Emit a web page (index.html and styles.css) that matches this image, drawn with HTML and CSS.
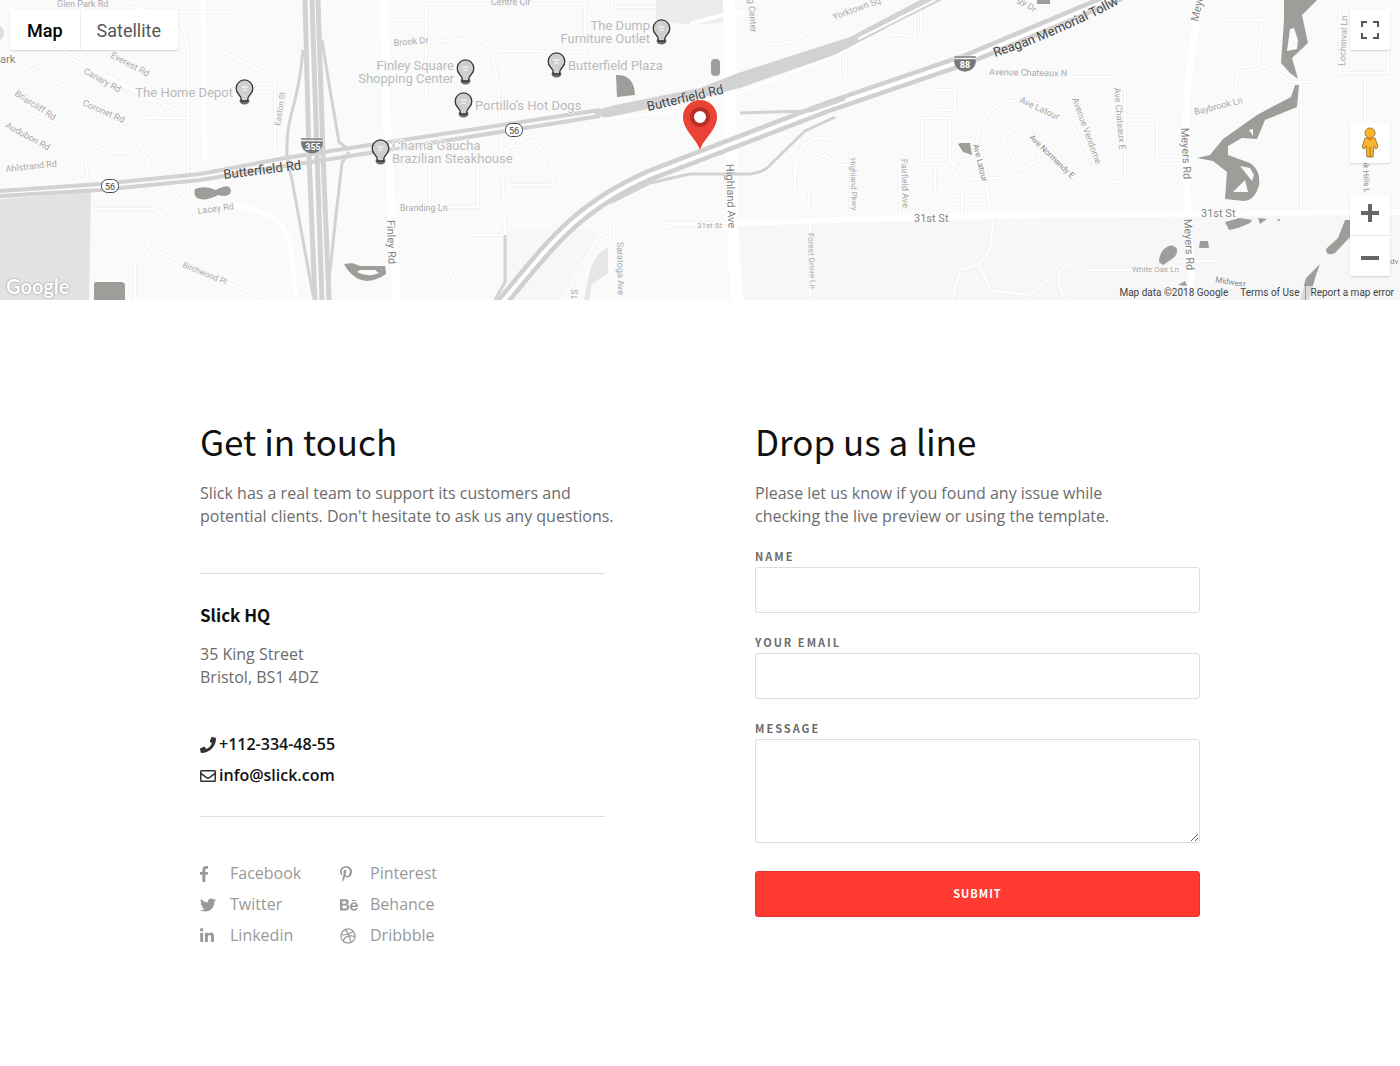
FILE: index.html
```html
<!DOCTYPE html>
<html lang="en">
<head>
<meta charset="utf-8">
<title>Slick – Contact</title>
<meta name="viewport" content="width=device-width, initial-scale=1">
<link rel="stylesheet" href="styles.css">
</head>
<body>
<section class="map" aria-label="Map">
<svg class="map-canvas" viewBox="0 0 1400 300" preserveAspectRatio="xMidYMid slice">
  <defs>
    <g id="poi">
      <ellipse cx="0" cy="9" rx="5" ry="3.500" fill="#6b6b6b"/>
      <path d="M-3 9C-3 6-4 4-6 2A8.300 8.300 0 1 1 6 2C4 4 3 6 3 9Z" fill="#cfcfcf" stroke="#333" stroke-width="1.300"/>
      <path d="M-3-5h6M-2-2h4" stroke="#f4f4f4" stroke-width="1.300"/>
    </g>
    <g id="route">
      <rect x="-8.500" y="-6.500" width="17" height="13" rx="6" fill="#fff" stroke="#444"/>
      <text class="shield-text" y="3.500">56</text>
    </g>
    <path id="shield" d="M-11-4H11C12 1 9 8 0 9C-9 8-12 1-11-4ZM-11-7H11V-5H-11Z" fill="#777" stroke="#fff" stroke-width=".5"/>
    <path id="tollway" d="M995 57Q1060 36 1130-2"/>
  </defs>
  <rect width="1400" height="300" fill="#fafafa"/>
  <path fill="#f7f7f7" d="M735 224L1400 212V300H740ZM505 230H600L560 300H500Z"/>
  <path fill="#e2e2e2" d="M0 199L91 192L89 300H0Z"/>
  <path fill="#ececec" d="M656 0H725V22L690 25L656 20Z"/>
  <path fill="#e6e6e6" d="M608 247V273L592 284L589 300H584L588 280Q592 255 608 247Z"/>
  <circle cx="-4" cy="33" r="8" fill="#ddd"/>

  <g class="minor-edge">
    <path id="lanes" d="M60 48L120 82L185 115M60 48L0 84M32 68L110 112L142 148L150 170M0 102L60 125L85 155L88 180M55 50L150 100Q175 115 145 118H190M110 0Q120 10 185 12H230M165 0Q190 30 188 60V190L180 200Q155 210 148 245L135 265V300M95 209H155L163 216M148 247L260 297M220 50L275 78V150M275 88H240M85 140L110 153Q150 150 155 170M426 100V4H585V52L500 51L475 38L430 42M492 51L499 90L505 235M473 235H505M378 20H426M430 160V207H478V160M505 150L525 130L550 160L554 185H510M500 150L540 140M612 0V7H656M620 50L625 75M760 0V25L770 45L790 42L850 12L875 0M840 52V80M846 52V75M870 40Q890 30 915 38V5M921 0V35M795 190V165Q800 140 820 138Q845 140 851 155V215M808 220L809 190L795 165M810 225V300M800 165L825 155L838 165H850M900 160V215M920 160H950L962 190V215M922 118H950V160H922ZM935 90H955V110H940ZM950 160L970 180L985 178L993 225L990 250L979 264L960 270L952 300M979 264L990 290L1030 295L1050 278M977 140Q980 110 1010 101Q1060 100 1075 130L1095 165M977 140L988 178H1000V210M1003 140Q1010 125 1030 128L1040 160L1020 170ZM987 80L995 107M1072 77H1110L1125 90V180L1090 186L1060 170M1125 120H1157V160H1185M1072 77V95L1095 150M1225 20H1264V0M1262 20L1258 65L1238 68L1235 95M1258 65L1275 70L1290 82H1310L1340 73H1388V45M1340 73V10M1365 80V212M1085 270H1180M1180 261H1215M665 223H730M610 225V238L600 235L575 275L565 300M652 245Q655 225 680 225H700M461 250L450 275L440 300M950 200H990M920 175V210M935 170V190M1070 265Q1050 270 1065 300M1301 85V210"/>
  </g>
  <g class="minor">
    <use href="#lanes"/>
  </g>
  <g fill="none" stroke="#fff" stroke-linejoin="round">
    <path stroke-width="8" d="M384 0L387 130L397 300"/>
    <path stroke-width="12" d="M729 0L732 220L737 300"/>
    <path stroke-width="7" d="M1201 0C1188 60 1184 100 1187 190L1192 300"/>
    <path stroke-width="6" d="M738 223L1000 215L1400 212"/>
    <path stroke-width="4" d="M203 0L205 160M218 205C270 205 288 225 291 250L296 300M690 24L730 13H745"/>
  </g>

  <g fill="none" stroke="#d2d2d2" stroke-linejoin="round">
    <path stroke-width="5" d="M305 0L309 155L315 300"/>
    <path stroke-width="5" d="M312 0L317 155L322 300M318 0L323 155L329 300"/>
    <path stroke-width="3" d="M303 50Q300 85 291 115Q286 135 287 158L292 180L313 295M322 40L330 90L339 142L349 150M349 152L342 163L336 215L328 290"/>
    <path stroke-width="4" d="M0 191L100 184L200 174L285 158L350 148L600 110"/>
    <path stroke-width="4" d="M0 196L100 190L200 180L285 166L350 156L600 116"/>
    <path stroke-width="3" d="M505 235V282L495 300"/>
  </g>
  <path fill="#d2d2d2" d="M590 112L615 105L700 88L738 73L850 37L920 0H942L890 26L840 53L740 88L700 98L605 118Z"/>
  <path fill="none" stroke="#fff" stroke-width="2" d="M600 119L690 110L740 93L835 56L870 38M858 39L935 0"/>
  <path fill="none" stroke="#d0d0d0" stroke-width="13" d="M500 305C550 245 575 208 650 175L830 106L965 60L1120-5"/>
  <path fill="none" stroke="#fff" stroke-width="4" d="M500 305C550 245 575 208 650 175L830 106L965 60L1120-5"/>
  <path fill="none" stroke="#d2d2d2" stroke-width="3" d="M740 113L810 111L845 99M610 203L650 183L690 174H750Q765 172 770 165L805 131L835 117"/>

  <g fill="#9d9e99">
    <path d="M94 284Q94 282 96 282H122L125 284V300H94Z"/>
    <path d="M195 189Q205 185 216 190Q230 182 231 191Q230 198 218 195Q205 202 197 198Q193 194 195 189Z"/>
    <path fill-rule="evenodd" d="M344 264L352 263L360 266L385 266L386 274Q376 281 366 281Q352 279 344 264ZM357 272Q368 278 379 273L375 270H360Z"/>
    <path d="M616 75Q634 74 635 95L617 97Z"/>
    <rect x="711" y="59" width="9" height="17" rx="4"/>
    <path d="M958 144L961 143H970L972 155L963 152ZM1037 0H1050V4H1037Z"/>
    <path fill-rule="evenodd" d="M1284 0H1317L1302 15L1308 43L1292 58L1298 79L1290 73L1281 63L1284 20ZM1290 29L1287 51L1297 49L1298 40L1294 28Z"/>
    <path fill-rule="evenodd" d="M1295 85H1299L1297 107L1265 120L1257 139L1242 138L1228 146L1228 155L1250 163Q1261 170 1259 185Q1255 200 1244 201L1225 199L1227 172L1213 161L1197 158L1210 155L1223 139L1257 115L1291 97ZM1249 130L1253 136L1253 129ZM1240 166L1252 181L1254 175L1250 168ZM1233 192L1248 192L1245 180Z"/>
    <path d="M1225 222L1240 218L1252 220L1250 223L1238 228L1229 230ZM1258 218L1267 219L1260 224ZM1276 220L1280 219V221ZM1200 241H1208L1209 248H1199ZM1159 262Q1159 254 1164 249Q1172 242 1177 249Q1178 255 1172 259L1163 265ZM1178 285L1185 281L1187 286ZM1345 220H1352V235L1335 253Q1326 257 1326 249L1338 238ZM1320 264L1316 275L1309 300H1300L1306 278Z"/>
  </g>

  <use href="#route" x="110" y="186"/><use href="#route" x="514" y="130"/>
  <use href="#shield" x="312" y="145"/><use href="#shield" x="965" y="63"/>
  <text class="shield-num" x="313" y="150">355</text>
  <text class="shield-num" x="965" y="68">88</text>

  <g class="street">
    <text x="57" y="7">Glen Park Rd</text>
    <text transform="translate(110 57) rotate(28)">Everest Rd</text>
    <text transform="translate(83 73) rotate(29)">Canary Rd</text>
    <text transform="translate(82 105) rotate(24)">Coronet Rd</text>
    <text transform="translate(14 95) rotate(33)">Briarcliff Rd</text>
    <text transform="translate(5 127) rotate(29)">Audubon Rd</text>
    <text transform="translate(6 172) rotate(-6)">Ahlstrand Rd</text>
    <text transform="translate(198 214) rotate(-8)">Lacey Rd</text>
    <text transform="translate(182 267) rotate(22)" class="tiny">Birchwood Pl</text>
    <text transform="translate(280 126) rotate(-81)" class="tiny">Easton St</text>
    <text x="491" y="5">Centre Cir</text>
    <text transform="translate(394 46) rotate(-5)">Brook Dr</text>
    <text x="400" y="211">Branding Ln</text>
    <text transform="translate(617 242) rotate(89)">Saratoga Ave</text>
    <text x="697" y="228" class="tiny">31st St</text>
    <text transform="translate(577 300) rotate(-85)">1S</text>
    <text transform="translate(748 -6) rotate(86)">ng Center</text>
    <text transform="translate(834 20) rotate(-20)">Yorktown Sq</text>
    <text transform="translate(1017 1) rotate(35)">gy Dr</text>
    <text transform="translate(850 158) rotate(88)" class="tiny">Highland Pkwy</text>
    <text transform="translate(901 159) rotate(88)">Fairfield Ave</text>
    <text transform="translate(808 233) rotate(88)" class="tiny">Forest Grove Ln</text>
    <text transform="translate(989 75) rotate(1)">Avenue Chateaux N</text>
    <text transform="translate(1019 102) rotate(25)">Ave Latour</text>
    <text transform="translate(973 145) rotate(76)" class="tiny dark">Ave Latour</text>
    <text transform="translate(1029 138) rotate(44)" class="tiny dark">Ave Normandy E</text>
    <text transform="translate(1072 99) rotate(70)">Avenue Vendome</text>
    <text transform="translate(1114 88) rotate(85)">Ave Chateaux E</text>
    <text transform="translate(1195 115) rotate(-14)">Baybrook Ln</text>
    <text transform="translate(1345 66) rotate(-87)">Lochinval Ln</text>
    <text transform="translate(1363 160) rotate(88)" class="tiny dark">ok Hills L</text>
    <text x="1132" y="272" class="tiny">White Oak Ln</text>
    <text transform="translate(1215 282) rotate(10)" class="tiny dark">Midwest</text>
    <text x="1388" y="264" class="tiny dark">idv</text>
  </g>
  <g class="road">
    <text x="0" y="63">ark</text>
    <text transform="translate(387 220) rotate(88)">Finley Rd</text>
    <text transform="translate(726 164) rotate(88)">Highland Ave</text>
    <text transform="translate(1181 128) rotate(87)">Meyers Rd</text>
    <text transform="translate(1184 219) rotate(87)">Meyers Rd</text>
    <text transform="translate(1198 22) rotate(-77)">Meyers</text>
    <text x="914" y="222">31st St</text><text x="1201" y="217">31st St</text>
  </g>
  <g class="highway">
    <text transform="translate(224 179) rotate(-7)">Butterfield Rd</text>
    <text transform="translate(648 111) rotate(-13)">Butterfield Rd</text>
    <text><textPath href="#tollway">Reagan Memorial Tollw</textPath></text>
  </g>
  <g class="place">
    <text x="233" y="97" text-anchor="end">The Home Depot</text>
    <text x="454" y="70" text-anchor="end">Finley Square</text>
    <text x="454" y="83" text-anchor="end">Shopping Center</text>
    <text x="475" y="110">Portillo's Hot Dogs</text>
    <text x="568" y="70">Butterfield Plaza</text>
    <text x="650" y="30" text-anchor="end">The Dump</text>
    <text x="650" y="43" text-anchor="end">Furniture Outlet</text>
    <text x="392" y="150">Chama Gaucha</text>
    <text x="392" y="163">Brazilian Steakhouse</text>
  </g>
  <use href="#poi" x="244.500" y="92"/><use href="#poi" x="465.500" y="72"/><use href="#poi" x="463.500" y="105"/>
  <use href="#poi" x="556.500" y="65"/><use href="#poi" x="661.500" y="32"/><use href="#poi" x="380.500" y="152"/>
  <path fill="#ea4335" d="M700 150C696 138 683 130 683 117A17 17 0 0 1 717 117C717 130 704 138 700 150Z"/>
  <circle cx="700" cy="117" r="8" fill="#fff" stroke="#b92f25" stroke-width="4"/>
</svg>
  <div class="map-types">
    <button type="button" class="active">Map</button>
    <button type="button">Satellite</button>
  </div>
  <div class="map-tools">
    <button type="button" class="tool" aria-label="Fullscreen"><svg width="18" height="18" viewBox="0 0 18 18" fill="none" stroke="#555" stroke-width="2"><path d="M1 6V1h5M12 1h5v5M17 12v5h-5M6 17H1v-5"/></svg></button>
    <button type="button" class="tool pegman" aria-label="Street View"><svg width="18" height="32" viewBox="0 0 18 32" fill="#fbb52c" stroke="#8a6a25" stroke-width=".8"><path d="M4 11h10l3 9-2 2-2-3-1 11H6L5 19l-2 3-2-2z"/><path d="M9 20v10"/><circle cx="9" cy="6" r="5"/><path d="M6 11l3 3 3-3z" fill="#e58025" stroke="none"/></svg></button>
    <div class="zoom">
      <button type="button" class="tool" aria-label="Zoom in"><svg width="18" height="18" viewBox="0 0 18 18" stroke="#666" stroke-width="4"><path d="M0 9h18M9 0v18"/></svg></button>
      <button type="button" class="tool" aria-label="Zoom out"><svg width="18" height="18" viewBox="0 0 18 18" stroke="#666" stroke-width="4"><path d="M0 9h18"/></svg></button>
    </div>
  </div>
  <a class="map-logo" href="#">Google</a>
  <div class="map-legal"><span>Map data ©2018 Google</span><a href="#">Terms of Use</a><a href="#">Report a map error</a></div>
</section>

<main class="contact">
  <section class="info">
    <h1>Get in touch</h1>
    <p class="lead">Slick has a real team to support its customers and<br>potential clients. Don't hesitate to ask us any questions.</p>
    <address class="office">
      <h2>Slick HQ</h2>
      <p>35 King Street<br>Bristol, BS1 4DZ</p>
      <ul class="direct">
        <li><a href="tel:+1123344855"><svg class="icon" viewBox="0 0 512 512"><path d="M493.400 24.600l-104-24c-11.300-2.600-22.900 3.300-27.500 13.900l-48 112c-4.200 9.800-1.400 21.300 6.900 28l60.600 49.600c-36 76.700-98.900 140.500-177.200 177.200l-49.600-60.600c-6.800-8.300-18.200-11.100-28-6.900l-112 48C3.900 366.500-2 378.100.6 389.400l24 104C27.100 504.200 36.700 512 48 512c256.100 0 464-207.500 464-464 0-11.200-7.700-20.900-18.600-23.400z"/></svg>+112-334-48-55</a></li>
        <li><a href="mailto:info@slick.com"><svg class="icon" viewBox="0 0 512 512"><path d="M464 64H48C21.490 64 0 85.490 0 112v288c0 26.510 21.490 48 48 48h416c26.510 0 48-21.490 48-48V112c0-26.510-21.490-48-48-48zm0 48v40.805c-22.422 18.259-58.168 46.651-134.587 106.490-16.841 13.247-50.201 45.072-73.413 44.701-23.208.375-56.579-31.459-73.413-44.701C106.180 199.465 70.425 171.067 48 152.805V112h416zM48 400V214.398c22.914 18.251 55.409 43.862 104.938 82.646 21.857 17.205 60.134 55.186 103.062 54.955 42.717.231 80.509-37.199 103.053-54.947 49.528-38.783 82.032-64.401 104.947-82.653V400H48z"/></svg>info@slick.com</a></li>
      </ul>
    </address>
    <ul class="social">
      <li><a href="#"><svg class="icon" viewBox="0 0 264 512"><path d="M215.800 85H264V3.600C255.700 2.500 227.100 0 193.800 0 124.300 0 76.700 42.400 76.700 120.300V192H0v91h76.700v229h94V283h73.600l11.700-91h-85.300v-62.700c0-26.300 7.300-44.300 45.100-44.300z"/></svg><span>Facebook</span></a></li>
      <li><a href="#"><svg class="icon" viewBox="0 0 384 512"><path d="M204 6.500C101.400 6.500 0 74.900 0 185.600 0 256 39.600 296 63.600 296c9.900 0 15.600-27.600 15.600-35.400 0-9.300-23.700-29.100-23.700-67.800 0-80.400 61.200-137.400 140.400-137.400 68.100 0 118.500 38.700 118.500 109.800 0 53.100-21.300 152.700-90.300 152.700-24.900 0-46.200-18-46.200-43.800 0-37.800 26.400-74.400 26.400-113.400 0-66.200-93.900-54.200-93.900 25.800 0 16.800 2.100 35.400 9.600 50.700-13.800 59.400-42 147.900-42 209.100 0 18.900 2.700 37.500 4.500 56.400 3.400 3.800 1.700 3.400 6.900 1.500 50.400-69 48.600-82.500 71.400-172.800 12.300 23.400 44.100 36 69.300 36 106.200 0 153.900-103.500 153.900-196.800C384 71.300 298.200 6.500 204 6.500z"/></svg><span>Pinterest</span></a></li>
      <li><a href="#"><svg class="icon" viewBox="0 0 512 512"><path d="M459.370 151.716c.325 4.548.325 9.097.325 13.645 0 138.720-105.583 298.558-298.558 298.558-59.452 0-114.680-17.219-161.137-47.106 8.447.974 16.568 1.299 25.340 1.299 49.055 0 94.213-16.568 130.274-44.832-46.132-.975-84.792-31.188-98.112-72.772 6.498.974 12.995 1.624 19.818 1.624 9.421 0 18.843-1.300 27.614-3.573-48.081-9.747-84.143-51.980-84.143-102.985v-1.299c13.969 7.797 30.214 12.670 47.431 13.319-28.264-18.843-46.781-51.005-46.781-87.391 0-19.492 5.197-37.360 14.294-52.954 51.655 63.675 129.300 105.258 216.365 109.807-1.624-7.797-2.599-15.918-2.599-24.040 0-57.828 46.782-104.934 104.934-104.934 30.213 0 57.502 12.670 76.670 33.137 23.715-4.548 46.456-13.320 66.599-25.340-7.798 24.366-24.366 44.833-46.132 57.827 21.117-2.273 41.584-8.122 60.426-16.243-14.292 20.791-32.161 39.308-52.628 54.253z"/></svg><span>Twitter</span></a></li>
      <li><a href="#"><svg class="icon" viewBox="0 0 576 512"><path d="M232 237.200c31.800-15.200 48.400-38.200 48.400-74 0-70.600-52.600-87.800-113.300-87.800H0v354.400h171.800c64.400 0 124.900-30.900 124.900-102.900 0-44.500-21.100-77.400-64.700-89.700zM77.900 135.900H151c28.100 0 53.400 7.900 53.400 40.500 0 30.100-19.700 42.200-47.500 42.200h-79v-82.700zm83.300 233.700H77.900V272h84.900c34.300 0 56 14.300 56 50.600 0 35.800-25.900 47-57.600 47zm358.500-240.700H376V94h143.700v34.900zM576 305.200c0-75.900-44.400-139.200-124.900-139.200-78.200 0-131.300 58.800-131.300 135.800 0 79.900 50.300 134.700 131.300 134.700 61.300 0 101-27.600 120.100-86.300H509c-6.700 21.900-34.300 33.500-55.700 33.500-41.300 0-63-24.200-63-65.300h185.100c.3-4.200.6-8.700.6-13.200zM390.400 274c2.300-33.700 24.700-54.800 58.500-54.800 35.400 0 53.200 20.800 56.200 54.800H390.400z"/></svg><span>Behance</span></a></li>
      <li><a href="#"><svg class="icon" viewBox="0 0 448 512"><path d="M100.280 448H7.400V148.900h92.880zM53.790 108.100C24.090 108.100 0 83.500 0 53.800a53.790 53.790 0 0 1 107.580 0c0 29.700-24.100 54.300-53.790 54.300zM447.900 448h-92.680V302.400c0-34.700-.7-79.200-48.290-79.200-48.290 0-55.690 37.700-55.690 76.700V448h-92.780V148.900h89.080v40.800h1.300c12.400-23.500 42.690-48.300 87.880-48.300 94 0 111.280 61.900 111.280 142.300V448z"/></svg><span>Linkedin</span></a></li>
      <li><a href="#"><svg class="icon" viewBox="0 0 512 512"><g fill="none" stroke="currentColor" stroke-width="38"><circle cx="256" cy="256" r="228"/><path d="M165 48C245 142 315 275 348 460M36 220C190 220 335 190 422 98M90 410C170 260 320 225 482 270"/></g></svg><span>Dribbble</span></a></li>
    </ul>
  </section>
  <section class="write">
    <h1>Drop us a line</h1>
    <p class="lead">Please let us know if you found any issue while<br>checking the live preview or using the template.</p>
    <form class="form">
      <div class="field"><label for="name">NAME</label><input id="name" type="text"></div>
      <div class="field"><label for="email">YOUR EMAIL</label><input id="email" type="email"></div>
      <div class="field"><label for="message">MESSAGE</label><textarea id="message"></textarea></div>
      <button class="submit" type="submit">SUBMIT</button>
    </form>
  </section>
</main>
</body>
</html>
```
FILE: styles.css
```css
*, *::before, *::after { box-sizing: border-box; }

body {
  margin: 0;
  background: #fff;
  color: #6c6c6c;
  font: 16px/23px "Open Sans", sans-serif;
}

h1, h2, p, ul { margin: 0; padding: 0; }
ul { list-style: none; }
a { color: inherit; text-decoration: none; }
button { border: 0; padding: 0; cursor: pointer; font-family: inherit; }

/* Map */
.map {
  position: relative;
  height: 300px;
  overflow: hidden;
  font-family: Roboto, sans-serif;
}
.map-canvas { display: block; width: 100%; height: 100%; }
.minor-edge { fill: none; stroke: #f3f3f3; stroke-width: 4; }
.minor { fill: none; stroke: #fff; stroke-width: 2; }
.street { fill: #aaa; font-size: 9px; }
.street .tiny { font-size: 8px; }
.street .dark { fill: #888; }
.road { fill: #858585; font-size: 11px; }
.highway { fill: #444; font-size: 13px; stroke: #eee; stroke-width: 1px; paint-order: stroke; }
.place { fill: #bbb; font-size: 13px; stroke: #fafafa; stroke-width: 2px; paint-order: stroke; }
.shield-text { fill: #444; font-size: 9px; text-anchor: middle; }
.shield-num { fill: #fff; font-size: 9px; font-weight: 700; text-anchor: middle; }

.map-types {
  position: absolute;
  top: 10px;
  left: 10px;
  display: flex;
  border-radius: 2px;
  background: #fff;
  box-shadow: 0 1px 2px rgba(0, 0, 0, .15);
}
.map-types button {
  height: 40px;
  padding: 0 17px;
  background: none;
  color: #565656;
  font-size: 18px;
}
.map-types .active { box-shadow: 1px 0 #eee; color: #000; font-weight: 500; }

.map-tools { position: absolute; top: 10px; right: 10px; }
.tool {
  display: grid;
  place-items: center;
  width: 40px;
  height: 40px;
  border-radius: 2px;
  background: #fff;
  box-shadow: 0 1px 2px rgba(0, 0, 0, .15);
}
.pegman { margin: 73px 0 32px; }
.zoom { border-radius: 2px; background: #fff; box-shadow: 0 1px 2px rgba(0, 0, 0, .15); }
.zoom .tool { padding-bottom: 4px; box-shadow: none; }
.zoom .tool + .tool { height: 41px; padding: 4px 0 0; border-top: 1px solid #e6e6e6; }

.map-logo {
  position: absolute;
  bottom: 2px;
  left: 6px;
  color: #fff;
  font: 700 20px/24px Lato, sans-serif;
  text-shadow: 0 0 2px #999, 0 0 1px #999;
}
.map-legal {
  position: absolute;
  right: 0;
  bottom: 0;
  display: flex;
  padding: 0 6px;
  background: rgba(245, 245, 245, .7);
  color: #444;
  font-size: 10px;
  line-height: 14px;
}
.map-legal a { margin-left: 12px; }
.map-legal a + a { margin-left: 5px; padding-left: 5px; border-left: 1px solid #999; }

/* Contact */
.contact {
  display: grid;
  grid-template-columns: 445px 445px;
  justify-content: space-between;
  max-width: 1000px;
  margin: 0 auto;
  padding: 120px 0;
}
h1, h2, .field label, .submit { font-family: "Noto Sans CJK SC", sans-serif; }
h1 { color: #111; font-size: 35px; font-weight: 400; line-height: 42px; }
h2 { color: #111; font-size: 17px; font-weight: 700; line-height: 22px; }
.lead { margin-top: 20px; white-space: nowrap; }

.office {
  margin: 45px 40px 0 0;
  padding: 30px 0 29px;
  border: solid #ddd;
  border-width: 1px 0;
  font-style: normal;
}
.office p { margin-top: 17px; }
.direct { display: grid; gap: 8px; margin-top: 44px; color: #111; font-weight: 600; }
.direct a { display: flex; align-items: center; gap: 3px; }
.icon { display: block; height: 16px; fill: currentColor; }
.direct .icon { width: 16px; color: #333; }

.social {
  display: grid;
  grid-template-columns: repeat(2, 140px);
  row-gap: 8px;
  margin-top: 45px;
  color: #999;
}
.social a { display: grid; grid-template-columns: 30px auto; align-items: center; }

.form { display: grid; gap: 22px; margin-top: 21px; }
.field { display: grid; gap: 4px; }
.field label { font-size: 11px; font-weight: 700; line-height: 14px; letter-spacing: 2px; }
.field input, .field textarea {
  width: 100%;
  height: 46px;
  border: 1px solid #ddd;
  border-radius: 3px;
  padding: 10px;
  background: #fff;
  font: inherit;
}
.field textarea { height: 104px; resize: vertical; }
.submit {
  height: 46px;
  margin-top: 6px;
  padding-bottom: 2px;
  border: 1px solid #dd352b;
  border-radius: 3px;
  background: #ff3a30;
  color: #fff;
  font-size: 11px;
  font-weight: 700;
  letter-spacing: 1px;
}
@media (max-width: 1020px) {
  .contact { grid-template-columns: minmax(0, 445px); justify-content: center; gap: 60px; padding: 60px 20px; }
  .lead { white-space: normal; }
}
```
